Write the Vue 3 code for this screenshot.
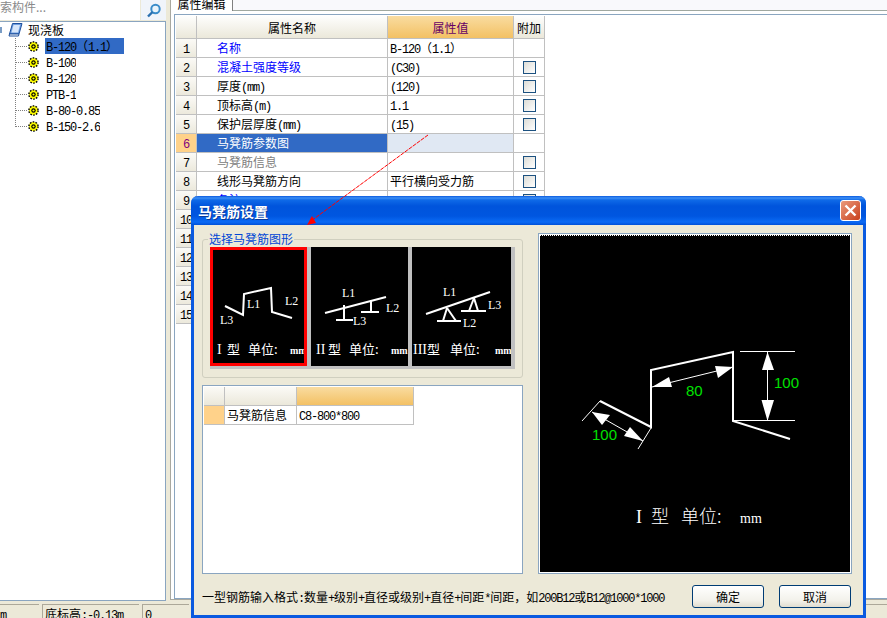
<script setup>
const treeItems = ['B-120（1.1）', 'B-100', 'B-120', 'PTB-1', 'B-80-0.85', 'B-150-2.6']

const rows = [
  { name: '名称', value: 'B-120（1.1）', tone: 'blue', noCheck: true },
  { name: '混凝土强度等级', value: '(C30)', tone: 'blue' },
  { name: '厚度(mm)', value: '(120)' },
  { name: '顶标高(m)', value: '1.1' },
  { name: '保护层厚度(mm)', value: '(15)' },
  { name: '马凳筋参数图', value: '', active: true, noCheck: true },
  { name: '马凳筋信息', value: '', tone: 'gray' },
  { name: '线形马凳筋方向', value: '平行横向受力筋' },
  { name: '备注', value: '', tone: 'blue' },
  { name: '', value: '' },
  { name: '', value: '' },
  { name: '', value: '' },
  { name: '', value: '' },
  { name: '', value: '' },
  { name: '', value: '' }
]

const thumbs = [
  {
    box: '210 247 97 119',
    selected: true,
    lines: ['225,306 243,315 244,294 271,288 272,312 292,318'],
    labels: [
      { x: 247, y: 308, t: 'L1' },
      { x: 285, y: 305, t: 'L2' },
      { x: 220, y: 324, t: 'L3' }
    ],
    caption: [
      { x: 217, t: 'I', kind: 'serif' },
      { x: 227, t: '型' },
      { x: 248, t: '单位:' },
      { x: 290, t: 'mm', kind: 'unit' }
    ]
  },
  {
    box: '311 247 97 119',
    lines: [
      '325,313 386,297',
      '344,305 344,320',
      '336,320 353,320',
      '371,300 371,312',
      '361,312 379,312'
    ],
    labels: [
      { x: 342, y: 297, t: 'L1' },
      { x: 386, y: 312, t: 'L2' },
      { x: 353, y: 325, t: 'L3' }
    ],
    caption: [
      { x: 316, t: 'II', kind: 'serif' },
      { x: 328, t: '型' },
      { x: 349, t: '单位:' },
      { x: 391, t: 'mm', kind: 'unit' }
    ]
  },
  {
    box: '412 247 99 119',
    lines: [
      '426,314 490,292',
      '437,321 461,321',
      '447,308 443,321',
      '447,308 456,321',
      '461,311 486,311',
      '474,298 469,311',
      '474,298 478,311'
    ],
    labels: [
      { x: 443, y: 296, t: 'L1' },
      { x: 463, y: 327, t: 'L2' },
      { x: 488, y: 309, t: 'L3' }
    ],
    caption: [
      { x: 413, t: 'III', kind: 'serif' },
      { x: 427, t: '型' },
      { x: 450, t: '单位:' },
      { x: 495, t: 'mm', kind: 'unit' }
    ]
  }
]

// splits mixed text so latin runs get the narrow mono look
function runs(text) {
  return (text.match(/[\x00-\x7f]+|[^\x00-\x7f]+/g) || []).map((t) => ({
    t,
    latin: /^[\x00-\x7f]/.test(t)
  }))
}

const note = '一型钢筋输入格式:数量+级别+直径或级别+直径+间距*间距，如200B12或B12@1000*1000'
</script>

<template>
  <div class="app">
    <div class="main">
      <div class="left">
        <div class="search">
          <div class="search-input">搜索构件...</div>
          <div class="search-btn">
            <svg width="16" height="15" viewBox="0 0 16 15">
              <circle cx="9.5" cy="6" r="4.2" fill="#eaf4fb" stroke="#3a8cc9" stroke-width="2" />
              <path d="M6.5 9 L2 13.5" stroke="#2a70b0" stroke-width="2.4" />
            </svg>
          </div>
        </div>
        <div class="tree">
          <div class="tree-root">
            <span class="stub"></span>
            <svg class="book" width="15" height="14" viewBox="0 0 15 14">
              <path d="M4.5 .5 H14 L11 11 H1.5 Z" fill="#6f9fe0" stroke="#1c4f9c" />
              <path d="M5.5 2 H12 L10 9.5 H3.5 Z" fill="#d6e6fa" />
              <path d="M1.5 11 H11 L10.5 13 H1 Z" fill="#fff" stroke="#1c4f9c" />
            </svg>
            <span>现浇板</span>
          </div>
          <ul class="tree-list">
            <li v-for="(item, i) in treeItems" :key="item" class="tree-item">
              <span class="branch"></span>
              <svg class="gear" width="11" height="11" viewBox="0 0 11 11">
                <circle cx="5.5" cy="5.5" r="4.6" fill="#ff0" stroke="#000" stroke-width="1.4" stroke-dasharray="1.6 1.3" />
                <circle cx="5.5" cy="5.5" r="2.2" fill="#000" />
                <circle cx="5.5" cy="5.5" r="1.1" fill="#ff0" />
              </svg>
              <div class="tree-label cell" :class="{ selected: i === 0 }">
                <span v-for="(r, k) in runs(item)" :key="k" :class="{ latin: r.latin }">{{ r.t }}</span>
              </div>
            </li>
          </ul>
        </div>
      </div>

      <div class="right">
        <div class="tabs">
          <div class="tab">属性编辑</div>
        </div>
        <div class="pane">
          <table class="props">
            <colgroup>
              <col style="width: 21px" />
              <col style="width: 191px" />
              <col style="width: 126px" />
              <col style="width: 31px" />
            </colgroup>
            <thead>
              <tr>
                <th></th>
                <th>属性名称</th>
                <th class="th-value">属性值</th>
                <th>附加</th>
              </tr>
            </thead>
            <tbody>
              <tr v-for="(row, i) in rows" :key="i">
                <td class="num" :class="{ 'num-active': row.active }">
                  <div class="cell"><span class="latin">{{ i + 1 }}</span></div>
                </td>
                <td class="name" :class="[row.tone, { 'name-active': row.active }]">
                  <div class="cell">
                    <span v-for="(r, k) in runs(row.name)" :key="k" :class="{ latin: r.latin }">{{ r.t }}</span>
                  </div>
                </td>
                <td class="value" :class="{ 'value-active': row.active }">
                  <div class="cell">
                    <span v-for="(r, k) in runs(row.value)" :key="k" :class="{ latin: r.latin }">{{ r.t }}</span>
                  </div>
                </td>
                <td class="extra">
                  <input v-if="!row.noCheck" class="check" type="checkbox" />
                </td>
              </tr>
            </tbody>
          </table>
        </div>
      </div>
    </div>

    <div class="status">
      <div class="status-cell first"><span class="latin">m</span></div>
      <div class="status-cell second">底标高<span class="latin">:-0.13m</span></div>
      <div class="status-cell third"><span class="latin">0</span></div>
      <div class="status-rest"></div>
    </div>

    <div class="dialog">
      <div class="titlebar">
        <span class="title">马凳筋设置</span>
        <button class="close">
          <svg width="13" height="13" viewBox="0 0 13 13">
            <path d="M1.5 1.5 L11.5 11.5 M11.5 1.5 L1.5 11.5" stroke="#fff" stroke-width="2.4" />
          </svg>
        </button>
      </div>

      <div class="dialog-body">
        <div class="col-left">
          <fieldset class="group">
            <legend>选择马凳筋图形</legend>
            <div class="strip">
              <svg
                v-for="(thumb, i) in thumbs"
                :key="i"
                class="thumb"
                :class="{ selected: thumb.selected }"
                :viewBox="thumb.box"
              >
                <polyline
                  v-for="(pts, j) in thumb.lines"
                  :key="j"
                  :points="pts"
                  fill="none"
                  stroke="#fff"
                  stroke-width="2"
                />
                <text
                  v-for="l in thumb.labels"
                  :key="l.t"
                  :x="l.x"
                  :y="l.y"
                  class="thumb-label"
                >{{ l.t }}</text>
                <text
                  v-for="c in thumb.caption"
                  :key="c.x"
                  :x="c.x"
                  y="354"
                  class="thumb-caption"
                  :class="c.kind"
                >{{ c.t }}</text>
              </svg>
            </div>
          </fieldset>

          <div class="info">
            <table class="info-table">
              <colgroup>
                <col style="width: 21px" />
                <col style="width: 72px" />
                <col style="width: 117px" />
              </colgroup>
              <thead>
                <tr>
                  <th></th>
                  <th></th>
                  <th class="th-value"></th>
                </tr>
              </thead>
              <tbody>
                <tr>
                  <td class="info-num"></td>
                  <td class="info-name"><div class="cell">马凳筋信息</div></td>
                  <td class="info-value"><div class="cell"><span class="latin">C8-800*800</span></div></td>
                </tr>
              </tbody>
            </table>
          </div>
        </div>

        <div class="preview">
          <svg class="preview-svg" viewBox="540 235 310 337">
            <line x1="540" y1="235.5" x2="850" y2="235.5" stroke="#fff" stroke-dasharray="1 1" />
            <polyline
              points="600,401 651,427 651,370 733,352 733,421 790,439"
              fill="none"
              stroke="#fff"
              stroke-width="2"
            />
            <g stroke="#fff" stroke-width="1" fill="none">
              <line x1="740" y1="351.5" x2="795" y2="351.5" />
              <line x1="733" y1="420.5" x2="795" y2="420.5" />
              <line x1="767.5" y1="352" x2="767.5" y2="421" />
              <line x1="652" y1="387" x2="733" y2="367" />
              <line x1="592" y1="412" x2="643" y2="441" />
              <line x1="600" y1="401" x2="582" y2="421" />
              <line x1="651" y1="428" x2="638" y2="449" />
            </g>
            <g fill="#fff">
              <polygon points="767.5,352 762,370 774,370" />
              <polygon points="767.5,421 761.5,400 774,400" />
              <polygon points="652,387 669,377 672,387" />
              <polygon points="733,367 715,366 718,378" />
              <polygon points="592,412 610,415 602,425" />
              <polygon points="643,441 630,427 624,436" />
            </g>
            <text x="774" y="388" class="dim">100</text>
            <text x="686" y="396" class="dim">80</text>
            <text x="592" y="440" class="dim">100</text>
            <text x="636" y="523" class="preview-caption serif">I</text>
            <text x="651" y="523" class="preview-caption">型</text>
            <text x="681" y="523" class="preview-caption">单位:</text>
            <text x="740" y="523" class="preview-unit serif">mm</text>
          </svg>
        </div>
      </div>

      <div class="dialog-foot">
        <div class="note">
          <span v-for="(r, k) in runs(note)" :key="k" :class="{ latin: r.latin }">{{ r.t }}</span>
        </div>
        <div class="buttons">
          <button class="btn">确定</button>
          <button class="btn">取消</button>
        </div>
      </div>
    </div>

    <svg class="pointer" width="887" height="618" viewBox="0 0 887 618">
      <line x1="428" y1="135" x2="311" y2="221" stroke="#f00" stroke-width="1" stroke-dasharray="4 1" />
      <polygon points="307,225 312,216 316,223" fill="#f00" />
    </svg>
  </div>
</template>

<style>
html,
body {
  margin: 0;
  background: #ece9d8;
}
</style>

<style scoped>
.app {
  position: relative;
  width: 887px;
  height: 618px;
  overflow: hidden;
  display: flex;
  flex-direction: column;
  background: #ece9d8;
  font-family: "Noto Sans CJK SC", sans-serif;
  font-size: 12px;
  color: #000;
}

.latin {
  font-family: "Liberation Mono", monospace;
  font-size: 12px;
  letter-spacing: -1.2px;
}

.serif {
  font-family: "Liberation Serif", serif;
}

/* fixed-height text line, mixed fonts must not grow the row */
.cell {
  height: 18px;
  line-height: 18px;
  white-space: nowrap;
  overflow: hidden;
}

.main {
  display: flex;
  height: 604px;
  flex: none;
}

/* left tree */
.left {
  width: 166px;
  height: 601px;
  display: flex;
  flex-direction: column;
  flex: none;
}

.search {
  display: flex;
  height: 20px;
  margin-bottom: 1px;
}

.search-input {
  width: 140px;
  margin-right: 1px;
  text-indent: -12px;
  background: #fff;
  color: #8a8a8a;
  line-height: 14px;
  overflow: hidden;
  white-space: nowrap;
}

.search-btn {
  width: 25px;
  background: #f0f4fa;
  display: flex;
  align-items: center;
  justify-content: center;
}

.tree {
  flex: 1;
  background: #fff;
  border: 1px solid #8aa5c0;
  border-left: none;
}

.tree-root {
  position: relative;
  display: flex;
  align-items: center;
  height: 16px;
  padding-left: 8px;
  gap: 5px;
  line-height: 16px;
}

.stub {
  position: absolute;
  left: 0;
  top: 5px;
  width: 2px;
  height: 6px;
  background: #7a9cc4;
}

.book {
  flex: none;
}

.tree-list {
  list-style: none;
  margin: 0 0 0 15px;
  padding: 0;
  height: 89px;
  border-left: 1px dotted #808080;
}

.tree-item {
  display: flex;
  align-items: center;
  height: 16px;
}

.branch {
  width: 11px;
  border-top: 1px dotted #808080;
  margin-right: 1px;
  flex: none;
}

.gear {
  flex: none;
  margin-right: 6px;
}

.tree-label {
  height: 16px;
  line-height: 16px;
  padding-left: 1px;
}

.tree-label.selected {
  width: 79px;
  box-sizing: border-box;
  background: #316ac5;
}

/* property panel */
.right {
  flex: 1;
  height: 600px;
  margin-left: 4px;
  display: flex;
  flex-direction: column;
  background: #fff;
  border-left: 1px solid #a8a8a0;
  border-bottom: 1px solid #a8a8a0;
  padding-left: 3px;
  box-sizing: border-box;
}

.tabs {
  height: 10px;
  margin: 0 0 3px -3px;
  background: #f9f9fc;
  border-bottom: 1px solid #a0a8a0;
}

.tab {
  width: 62px;
  height: 11px;
  box-sizing: border-box;
  background: #fff;
  border-right: 1px solid #808080;
  text-align: center;
  font-size: 12px;
  line-height: 8px;
  overflow: hidden;
}

.pane {
  flex: 1;
  padding: 1px 0 0 1px;
  border: 1px solid #8aa5c0;
  border-right: none;
}

.props,
.info-table {
  table-layout: fixed;
  border-collapse: separate;
  border-spacing: 0;
}

.props {
  width: 369px;
}

.props th,
.props td,
.info-table th,
.info-table td {
  box-sizing: border-box;
  padding: 0;
  border-right: 1px solid #c0c0c0;
  border-bottom: 1px solid #c0c0c0;
  font-weight: 400;
  white-space: nowrap;
  overflow: hidden;
}

.props th {
  height: 23px;
  background: linear-gradient(#fefefd, #ebe8da);
  text-align: center;
}

.props th.th-value,
.info-table th.th-value {
  background: linear-gradient(#f9dca0, #f3c164);
  color: #660066;
}

.props td {
  height: 19px;
}

.num {
  background: linear-gradient(#fbfaf6, #ece9dc);
  text-align: center;
}

.num-active {
  background: #ffd28a;
  color: #800080;
}

.props td.name {
  padding-left: 20px;
}

.blue {
  color: #0000ff;
}

.gray {
  color: #808080;
}

.name-active {
  background: #316ac5;
  color: #fff;
}

.props td.value {
  padding-left: 2px;
}

.value-active {
  background: #e0e8f3;
}

.check {
  appearance: none;
  display: block;
  width: 13px;
  height: 13px;
  margin: 0 0 0 9px;
  box-sizing: border-box;
  border: 1px solid #1c5180;
  background: linear-gradient(135deg, #dcdcd6, #fff);
}

/* status bar */
.status {
  display: flex;
  flex: 1;
  gap: 3px;
}

.status-cell {
  box-sizing: border-box;
  border-top: 1px solid #aca899;
  border-left: 1px solid #aca899;
  padding: 2px 0 0 2px;
  line-height: 14px;
  overflow: hidden;
}

.first {
  width: 39px;
  border-left: none;
  padding-left: 0;
}

.second {
  width: 97px;
}

.third {
  width: 47px;
}

.status-rest {
  flex: 1;
  border-top: 1px solid #aca899;
}

/* dialog window */
.dialog {
  position: absolute;
  left: 191px;
  top: 196px;
  width: 675px;
  height: 422px;
  box-sizing: border-box;
  display: flex;
  flex-direction: column;
  background: #ece9d8;
  border: 3px solid #0a5ae0;
  border-top: none;
  border-radius: 7px 7px 0 0;
}

.titlebar {
  display: flex;
  align-items: center;
  justify-content: space-between;
  height: 29px;
  margin: 0 -3px;
  padding: 0 5px 0 7px;
  flex: none;
  border-radius: 7px 7px 0 0;
  background: linear-gradient(#0a5adf 0, #3d8ff5 2px, #0f6ae8 4px, #0054dc 10px, #0056e0 20px, #0a6af5 26px, #0050d8 29px);
}

.title {
  color: #fff;
  font-size: 14px;
  font-weight: 700;
  text-shadow: 1px 1px 0 #0a3a9a;
}

.close {
  width: 21px;
  height: 21px;
  padding: 0;
  display: flex;
  align-items: center;
  justify-content: center;
  background: linear-gradient(135deg, #ea9a7c, #c9401c);
  border: 1px solid #fff;
  border-radius: 3px;
}

.dialog-body {
  display: grid;
  grid-template-columns: 321px 314px;
  column-gap: 15px;
  padding: 7px 0 0 8px;
  flex: none;
}

.col-left {
  display: flex;
  flex-direction: column;
  gap: 7px;
}

.group {
  margin: 0;
  padding: 1px 0 8px 7px;
  height: 146px;
  box-sizing: border-box;
  border: 1px solid #d0cfbf;
  border-radius: 3px;
  min-width: 0;
}

.group legend {
  margin-left: -2px;
  padding: 0 1px;
  color: #0046d5;
  font-size: 12px;
  line-height: 14px;
}

.strip {
  display: inline-flex;
  gap: 4px;
  padding: 0 4px 3px 0;
  background: #c0c0c0;
}

.thumb {
  display: block;
  width: 97px;
  height: 119px;
  background: #000;
}

.thumb:last-child {
  width: 99px;
}

.thumb.selected {
  outline: 3px solid #f00;
  outline-offset: -3px;
}

.thumb-label {
  fill: #fff;
  font-family: "Liberation Serif", serif;
  font-size: 12px;
}

.thumb-caption {
  fill: #fff;
  font-size: 13px;
}

.thumb-caption.serif {
  font-family: "Liberation Serif", serif;
  font-size: 14px;
}

.thumb-caption.unit {
  font-family: "Liberation Serif", serif;
  font-size: 10px;
  font-weight: 700;
}

.info {
  height: 189px;
  box-sizing: border-box;
  padding: 1px;
  background: #fff;
  border: 1px solid #8aa5c0;
}

.info-table {
  width: 210px;
}

.info-table th {
  height: 19px;
  background: linear-gradient(#fbfaf6, #ebe8da);
}

.info-table td {
  height: 19px;
}

.info-num {
  background: #ffd28a;
}

.info-table td.info-name,
.info-table td.info-value {
  padding-left: 2px;
}

.preview {
  margin-top: 1px;
  height: 341px;
  box-sizing: border-box;
  padding: 1px;
  background: #fff;
  border: 1px solid #8aa5c0;
}

.preview-svg {
  display: block;
  width: 310px;
  height: 337px;
  background: #000;
}

.dim {
  fill: #00e000;
  font-family: "Liberation Sans", sans-serif;
  font-size: 15px;
}

.preview-caption {
  fill: #fff;
  font-size: 18px;
  font-weight: 300;
}

.preview-unit {
  fill: #fff;
  font-size: 14px;
}

.dialog-foot {
  display: flex;
  align-items: center;
  justify-content: space-between;
  margin-top: 11px;
  padding: 0 12px 0 8px;
  height: 23px;
  flex: none;
}

.note {
  flex: none;
  height: 18px;
  line-height: 18px;
  white-space: nowrap;
}

.buttons {
  display: flex;
  gap: 15px;
}

.btn {
  width: 72px;
  height: 23px;
  padding: 0;
  border: 1px solid #003c74;
  border-radius: 3px;
  background: linear-gradient(#fff, #f2f1ea 70%, #e0ddd0);
  font-family: "Noto Sans CJK SC", sans-serif;
  font-size: 12px;
  color: #000;
}

/* red leader arrow drawn over the dialog */
.pointer {
  position: absolute;
  left: 0;
  top: 0;
  pointer-events: none;
}
</style>
